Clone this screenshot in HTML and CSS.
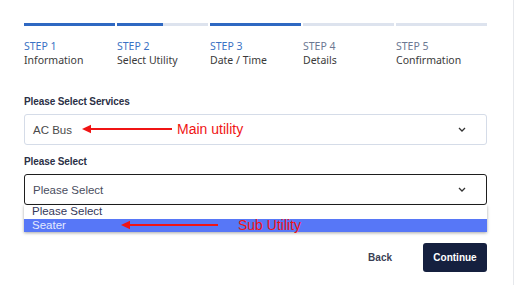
FILE: index.html
```html
<!DOCTYPE html>
<html>
<head>
<meta charset="utf-8">
<link rel="stylesheet" href="styles.css">
</head>
<body>
<div class="page">
  <div class="steps">
    <div class="step done">
      <div class="bar"><span class="fill" style="width:100%"></span></div>
      <div class="num">STEP 1</div>
      <div class="name">Information</div>
    </div>
    <div class="step done">
      <div class="bar"><span class="fill" style="width:50%"></span></div>
      <div class="num">STEP 2</div>
      <div class="name">Select Utility</div>
    </div>
    <div class="step done">
      <div class="bar"><span class="fill" style="width:100%"></span></div>
      <div class="num">STEP 3</div>
      <div class="name">Date / Time</div>
    </div>
    <div class="step">
      <div class="bar"></div>
      <div class="num">STEP 4</div>
      <div class="name">Details</div>
    </div>
    <div class="step">
      <div class="bar"></div>
      <div class="num">STEP 5</div>
      <div class="name">Confirmation</div>
    </div>
  </div>

  <div class="field">
    <div class="label">Please Select Services</div>
    <div class="select">
      <span class="value">AC Bus</span>
      <svg class="chev" width="8" height="5" viewBox="0 0 8 5"><path d="M1 1 L4 4 L7 1" fill="none" stroke="#333" stroke-width="1.3"/></svg>
      <div class="note note-main">
        <svg class="arrow" width="90" height="10" viewBox="0 0 90 10"><path d="M0 5 L9 0.8 L9 9.2 Z" fill="#f01414"/><line x1="8" y1="5" x2="90" y2="5" stroke="#f01414" stroke-width="2"/></svg>
        <span class="note-text">Main utility</span>
      </div>
    </div>
  </div>

  <div class="field">
    <div class="label">Please Select</div>
    <div class="select active">
      <span class="value">Please Select</span>
      <svg class="chev" width="8" height="5" viewBox="0 0 8 5"><path d="M1 1 L4 4 L7 1" fill="none" stroke="#333" stroke-width="1.3"/></svg>
      <ul class="menu">
        <li class="opt">Please Select</li>
        <li class="opt hl">Seater
          <div class="note note-sub">
            <svg class="arrow" width="97" height="10" viewBox="0 0 97 10"><path d="M0 5 L9 0.8 L9 9.2 Z" fill="#f01414"/><line x1="8" y1="5" x2="97" y2="5" stroke="#f01414" stroke-width="2"/></svg>
            <span class="note-text">Sub Utility</span>
          </div>
        </li>
      </ul>
    </div>
  </div>

  <div class="actions">
    <button class="btn back">Back</button>
    <button class="btn continue">Continue</button>
  </div>
</div>
</body>
</html>
```

FILE: styles.css
```css
* { box-sizing: border-box; }
html, body { margin: 0; padding: 0; background: #fff; }
body { width: 515px; height: 285px; overflow: hidden; }
.page {
  width: 514px;
  height: 285px;
  border-right: 1px solid #e6e8ec;
  padding: 23px 26px 0 24px;
  font-family: "Liberation Sans", Arial, sans-serif;
}
.steps {
  display: grid;
  grid-template-columns: repeat(5, 1fr);
  column-gap: 2px;
}
.bar {
  height: 3px;
  background: #dde3ee;
  margin-bottom: 13px;
  display: flex;
}
.fill { display: block; height: 3px; background: #2f68c2; }
.num, .name {
  font-family: "Noto Sans", "Open Sans", sans-serif;
  font-size: 10.5px;
  line-height: 14px;
}
.num { color: #6c7892; }
.done .num { color: #3a72c4; }
.name { color: #3a3a3a; }

.field { margin-top: 29px; }
.field + .field { margin-top: 11px; }
.label {
  font-size: 10px;
  font-weight: bold;
  color: #2b3046;
  line-height: 12px;
  margin-bottom: 6px;
  letter-spacing: -0.1px;
}
.select {
  position: relative;
  height: 31px;
  border: 1px solid #d5dce8;
  border-radius: 3px;
  display: flex;
  align-items: center;
  justify-content: space-between;
  padding: 0 20px 0 8px;
}
.select.active { border-color: #1e1e1e; }
.value { font-size: 11.5px; color: #4a4a4a; }
.active .value { color: #4a4d60; }
.chev { display: block; }

.note {
  position: absolute;
  display: flex;
  align-items: center;
}
.note-text { font-size: 14px; color: #f01414; line-height: 16px; }
.note-main { left: 57px; top: 6px; }
.note-main .note-text { margin-left: 5px; }
.note-sub { left: 97px; top: -2px; }
.note-sub .note-text { margin-left: 20px; }

.menu {
  position: absolute;
  left: -1px;
  right: -1px;
  top: 30px;
  margin: 0;
  padding: 0;
  list-style: none;
  background: #fff;
  box-shadow: 0 1px 3px rgba(0,0,0,0.35);
}
.opt {
  position: relative;
  height: 13.5px;
  line-height: 13px;
  font-size: 11.5px;
  padding-left: 8px;
  color: #35385a;
}
.opt.hl { background: #5777f7; color: #e4e9ff; }

.actions {
  display: flex;
  justify-content: flex-end;
  align-items: center;
  margin-top: 38px;
}
.btn {
  font-family: "Liberation Sans", Arial, sans-serif;
  font-weight: bold;
  font-size: 10px;
  border: 0;
  cursor: pointer;
}
.back {
  background: transparent;
  color: #3a3f55;
  padding: 0;
  margin-right: 31px;
}
.continue {
  width: 64px;
  height: 29px;
  background: #15203f;
  color: #fff;
  border-radius: 3px;
}
```
